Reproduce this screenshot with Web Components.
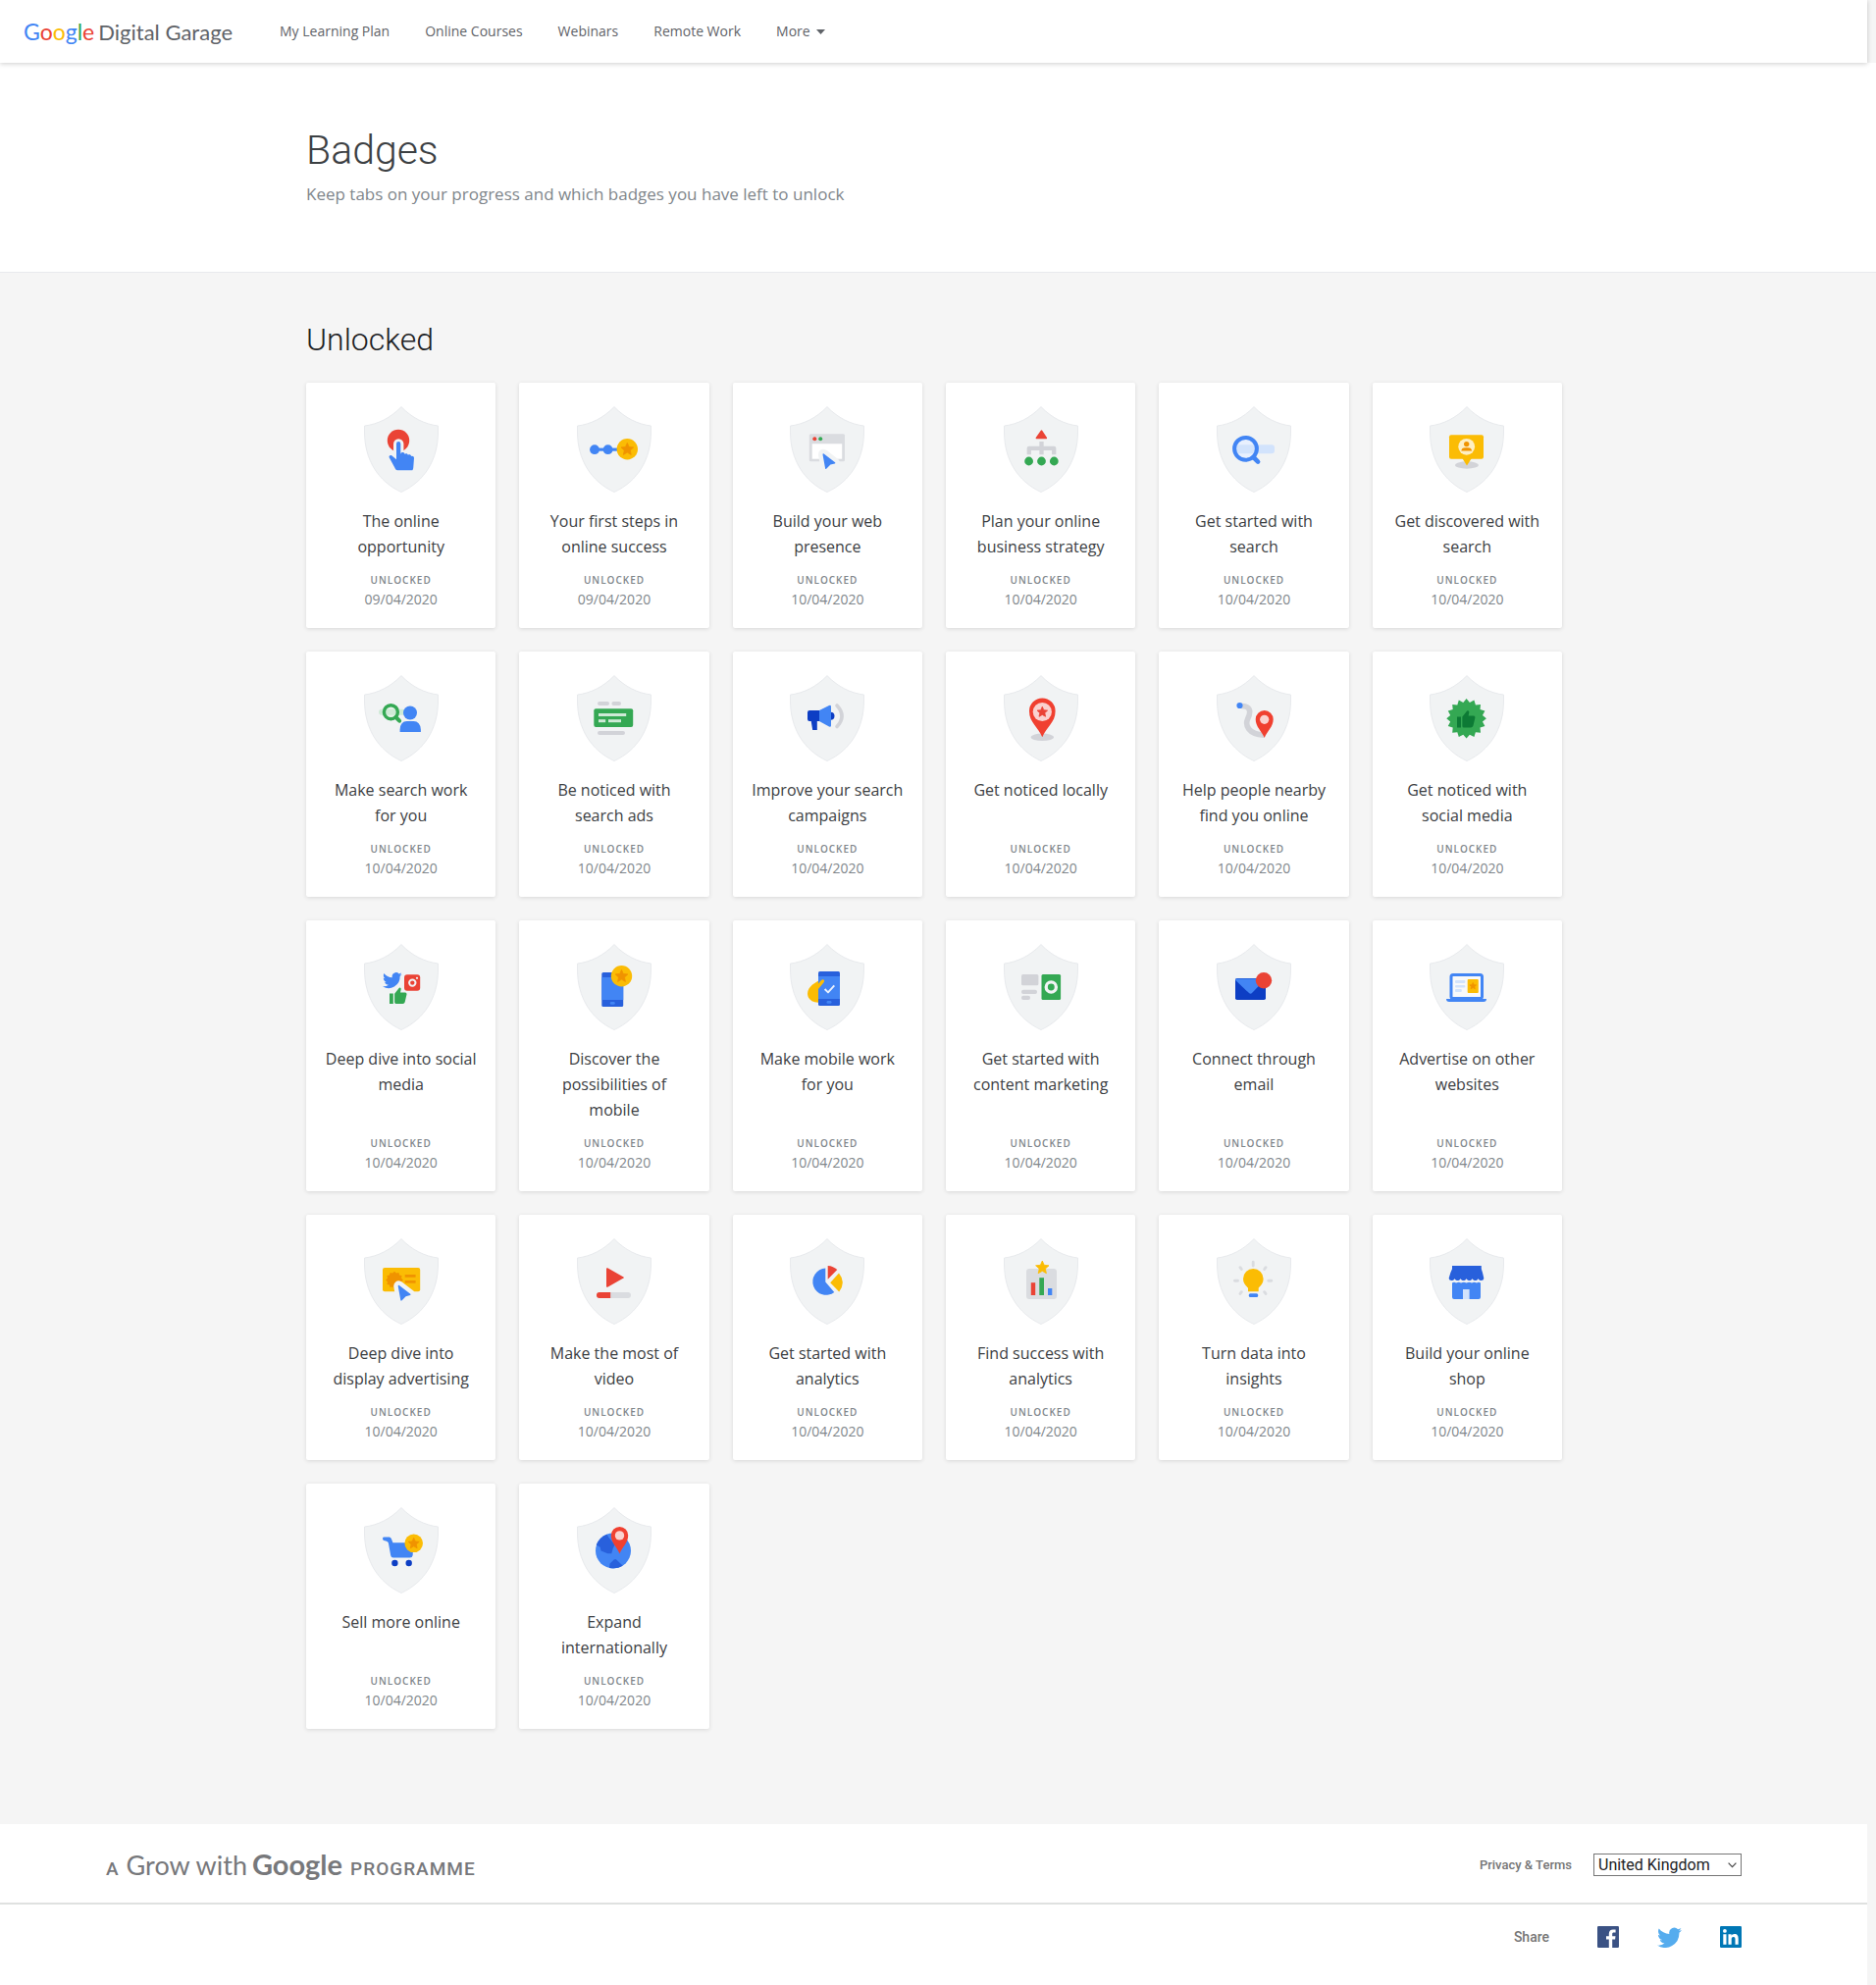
<!DOCTYPE html>
<html lang="en-GB">
<head>
<meta charset="utf-8">
<title>Badges - Google Digital Garage</title>
<style>
  html { background: #f5f5f5; }
  body {
    margin: 0;
    background: #f5f5f5;
    font-family: "Open Sans", "Noto Sans", sans-serif;
    --gutter: 9px;
    --blue: #4285f4;
    --red: #ea4335;
    --yellow: #fbbc04;
    --green: #34a853;
  }
</style>
</head>
<body>
<garage-header>
  <a href="#plan">My Learning Plan</a>
  <a href="#courses">Online Courses</a>
  <a href="#webinars">Webinars</a>
  <a href="#remote">Remote Work</a>
</garage-header>
<main>
  <page-hero>
    <h1 slot="title">Badges</h1>
    <p slot="lead">Keep tabs on your progress and which badges you have left to unlock</p>
  </page-hero>
  <badge-section>
    <h2 slot="title">Unlocked</h2>
    <badge-card icon="tap" date="09/04/2020">The online opportunity</badge-card>
    <badge-card icon="steps" date="09/04/2020">Your first steps in online success</badge-card>
    <badge-card icon="browser" date="10/04/2020">Build your web presence</badge-card>
    <badge-card icon="strategy" date="10/04/2020">Plan your online business strategy</badge-card>
    <badge-card icon="search" date="10/04/2020">Get started with search</badge-card>
    <badge-card icon="discovered" date="10/04/2020">Get discovered with search</badge-card>
    <badge-card icon="searchUser" date="10/04/2020">Make search work for you</badge-card>
    <badge-card icon="ads" date="10/04/2020">Be noticed with search ads</badge-card>
    <badge-card icon="megaphone" date="10/04/2020">Improve your search campaigns</badge-card>
    <badge-card icon="local" date="10/04/2020">Get noticed locally</badge-card>
    <badge-card icon="route" date="10/04/2020">Help people nearby find you online</badge-card>
    <badge-card icon="seal" date="10/04/2020">Get noticed with social media</badge-card>
    <badge-card icon="social" date="10/04/2020">Deep dive into social media</badge-card>
    <badge-card icon="phoneStar" date="10/04/2020">Discover the possibilities of mobile</badge-card>
    <badge-card icon="phoneHand" date="10/04/2020">Make mobile work for you</badge-card>
    <badge-card icon="content" date="10/04/2020">Get started with content marketing</badge-card>
    <badge-card icon="email" date="10/04/2020">Connect through email</badge-card>
    <badge-card icon="laptop" date="10/04/2020">Advertise on other websites</badge-card>
    <badge-card icon="display" date="10/04/2020">Deep dive into display advertising</badge-card>
    <badge-card icon="video" date="10/04/2020">Make the most of video</badge-card>
    <badge-card icon="pie" date="10/04/2020">Get started with analytics</badge-card>
    <badge-card icon="bars" date="10/04/2020">Find success with analytics</badge-card>
    <badge-card icon="bulb" date="10/04/2020">Turn data into insights</badge-card>
    <badge-card icon="shop" date="10/04/2020">Build your online shop</badge-card>
    <badge-card icon="cart" date="10/04/2020">Sell more online</badge-card>
    <badge-card icon="globe" date="10/04/2020">Expand internationally</badge-card>
  </badge-section>
</main>
<garage-footer></garage-footer>

<script>
const SHIELD = '#f1f3f4', GREY = '#d2d3d8', DARK = '#0d3ec4', MID = '#2860dc', ORANGE = '#f09300';
const BLUE = '#4285f4', RED = '#ea4335', YELLOW = '#fbbc04', GREEN = '#34a853', PALE = '#d2e3fc';

const burst = (cx, cy, outer, inner, points) => {
  const p = [];
  for (let i = 0; i < points * 2; i++) {
    const r = i % 2 ? inner : outer, a = Math.PI * i / points - Math.PI / 2;
    p.push((cx + r * Math.cos(a)).toFixed(1) + ',' + (cy + r * Math.sin(a)).toFixed(1));
  }
  return p.join(' ');
};
const star = (cx, cy, r, fill) => `<polygon points="${burst(cx, cy, r, r * .47, 5)}" fill="${fill}" stroke="${fill}" stroke-width=".8" stroke-linejoin="round"/>`;
const box = (x1, y1, x2, y2, fill, r = 0) => `<rect x="${x1}" y="${y1}" width="${x2 - x1}" height="${y2 - y1}" rx="${r}" fill="${fill}"/>`;
const dot = (cx, cy, r, fill) => `<circle cx="${cx}" cy="${cy}" r="${r}" fill="${fill}"/>`;
const path = (d, fill) => `<path d="${d}" fill="${fill}"/>`;
const line = (d, color, w, cap = 'round') => `<path d="${d}" fill="none" stroke="${color}" stroke-width="${w}" stroke-linecap="${cap}" stroke-linejoin="round"/>`;
const coin = (cx, cy, r) => dot(cx, cy, r, YELLOW) + star(cx, cy + .3, r * .62, ORANGE);
const pin = (cx, cy, r, tip) => path(`M${cx - r} ${cy}a${r} ${r} 0 0 1 ${2 * r} 0C${cx + r} ${cy + r * .9} ${cx + r * .3} ${tip - r * .8} ${cx} ${tip}C${cx - r * .3} ${tip - r * .8} ${cx - r} ${cy + r * .9} ${cx - r} ${cy}z`, '#f04030');
const cursor = (x, y) => {
  const d = `M${x} ${y + .6}q0-1.4 1.2-.8L${x + 12.6} ${y + 8.6}q.8.9-.3 1.2l-4.4 1.2L${x + 4} ${y + 15}q-1 1-1.4-.2z`;
  return `<path d="${d}" fill="${BLUE}" stroke="${SHIELD}" stroke-width="9" stroke-linejoin="round" paint-order="stroke"/>`;
};
const thumb = (x, y, s, fill) => `<g transform="translate(${x} ${y}) scale(${s})" fill="${fill}"><path d="M0 6h4V17H0zM5.4 6.200L10.200.2q.6-.8 1.500-.2.8.6.6 1.600L11.600 5h5.300q1.800.2 1.500 2l-1.900 8.200q-.4 1.800-2.300 1.800H7q-1.600 0-1.600-1.500z"/></g>`;
const BIRD = 'M24 4.600c-.9.400-1.800.7-2.800.8 1-.6 1.800-1.600 2.200-2.700-1 .6-2 1-3.100 1.200A4.900 4.900 0 0 0 11.900 8.400C7.700 8.200 4.100 6.300 1.700 3.200 .4 5.400 1 8.300 3.200 9.800c-.8 0-1.600-.2-2.200-.6v.1c0 2.300 1.600 4.400 3.900 4.800-.7.2-1.500.2-2.200.1.600 2 2.400 3.400 4.600 3.400A9.900 9.900 0 0 1 0 19.500 14 14 0 0 0 21.500 7.100c1-.7 1.800-1.600 2.500-2.500z';
const phone = (x1, y1, x2, y2) => box(x1, y1, x2, y2, MID, 1.5) + box(x1, y1 + 5, x2, y2 - 7, BLUE) + box((x1 + x2) / 2 - 2.5, y2 - 5, (x1 + x2) / 2 + 2.5, y2 - 2.2, BLUE, 1.4);

const ICONS = {
  tap: dot(35, 35, 11.2, RED) + box(30, 33.3, 40.4, 50, SHIELD, 5.2) +
    path('M33 38.200a2.100 2.100 0 0 1 4.300 0V49c.3-2.400 3.700-2.600 4.200-.3 1-1 3.200-.6 3.400 1 1.200-.9 3-.3 3.200 1.200 1.500-.5 2.900.3 2.900 1.900l-.7 9.200c0 1.500-.5 2.500-1 3.300H34c-1.400-.2-2-1.300-2.600-2.600l-5.700-10.500c-.7-1.700 1.200-3 2.500-1.900L33 54.200z', BLUE),
  steps: box(18, 42.600, 42, 45.700, BLUE) + dot(18, 44.200, 4.900, BLUE) + dot(31.600, 44.200, 4.900, BLUE) + coin(51.300, 43.700, 10.700),
  browser: box(19.800, 28.300, 56, 56.300, '#dadce0', 1.500) + box(22.700, 38.300, 53.200, 53.700, '#fff') + dot(25.300, 33.300, 2, RED) + dot(31.200, 33.300, 2, GREEN) + cursor(33.500, 48.600),
  strategy: path('M37.800 24.800q.7-1 1.400 0L44 32q.5 1.300-.8 1.300H33.500q-1.300 0-.8-1.300z', RED) +
    line('M38.500 36v13.300M25.800 49.300v-6.500h25.400v6.500', GREY, 4.300, 'butt') + dot(25.600, 56, 4.400, GREEN) + dot(38.500, 56, 4.400, GREEN) + dot(51.300, 56, 4.400, GREEN),
  search: dot(29.500, 43.300, 12, '#e8f0fe') + box(19, 39.300, 59, 48.200, PALE, 3) + '<circle cx="29.500" cy="43.300" r="11.400" fill="none" stroke="#4285f4" stroke-width="4"/>' + line('M37.500 52l4.600 4.600', BLUE, 4.600),
  discovered: '<ellipse cx="38" cy="60" rx="12" ry="3.700" fill="#d2d3d8"/>' + box(20, 29.300, 55, 53.700, YELLOW, 2) + path('M33.300 53h9.600L38 60.600z', YELLOW) + dot(37.700, 41.300, 8.400, '#feefc3') + dot(37.700, 38.600, 2.700, ORANGE) + path('M32.300 45.600q.3-3.400 4-3.400h2.800q3.700 0 4 3.400z', ORANGE),
  searchUser: dot(27.400, 37.700, 7, '#e6f4ea') + box(15, 34.700, 42, 40.700, '#ceead6', 3) + '<circle cx="27.400" cy="37.700" r="7" fill="none" stroke="#34a853" stroke-width="3.400"/>' + line('M32.500 43l3.600 3.700', GREEN, 4) + dot(47, 38.500, 7, BLUE) + path('M36.600 58v-2.500q.5-8.500 7-8.500h7q6.600 0 7.300 8.500V58z', BLUE),
  ads: box(21, 27, 33, 31, GREY, 2) + box(35.400, 27, 45, 31, GREY, 2) + box(17.300, 34.200, 57.200, 53, GREEN, 2) + box(22, 39, 50.200, 42, '#ceead6') + box(22, 45.200, 29.200, 48.200, '#ceead6') + box(32, 45.200, 45, 48.200, '#ceead6') + box(21, 57, 49, 61, GREY, 2),
  megaphone: dot(41.500, 41.800, 4, DARK) + path('M20 36h10v11h-2.200v9h-4.600l-1.500-9H20q-2 0-2-2V38q0-2 2-2z', DARK) + path('M30 36l10-5q2-.6 2 1.200v19.200q0 1.800-2 1.200l-10-5.600z', BLUE) + line('M48 31q10 10.800 0 21.500', GREY, 3.600),
  local: '<ellipse cx="39.300" cy="63.300" rx="11.800" ry="3.700" fill="#d2d3d8"/>' + pin(39.300, 36.700, 13.300, 63.300) + dot(39.300, 37.500, 9.600, '#fad2cf') + star(39.300, 37.800, 5.600, '#ea4335'),
  route: line('M25 31.500c11 0 9.500 7.500 6.500 13.500-2.500 6 .5 15.300 16.500 16.200', GREY, 5.600, 'butt') + dot(23.500, 31, 3.100, BLUE) + pin(48.700, 45, 9, 64) + dot(48.700, 45.300, 4.600, '#fad2cf'),
  seal: `<polygon points="${burst(37.600, 44.300, 20.300, 16.700, 16)}" fill="${GREEN}"/>` + thumb(28, 36.400, 1, '#0d7a35'),
  social: `<g transform="translate(19 27.300) scale(.82)"><path d="${BIRD}" fill="${BLUE}"/></g>` + box(41, 31.200, 57.200, 47.800, RED, 3) + '<circle cx="49.300" cy="39.600" r="3.200" fill="none" stroke="#f1f3f4" stroke-width="2"/>' + dot(54, 34.800, 1.100, SHIELD) + thumb(26, 44.800, .95, GREEN),
  phoneStar: phone(25.300, 29, 47.200, 64) + coin(45.500, 32.700, 10.700),
  phoneHand: path('M29 59.700q-8 0-10.400-6c-1.800-5 1-9.200 4.400-12.200L31.500 36q2-.8 3.500 1V42l-5 6z', YELLOW) + phone(29, 28, 51, 63) + path('M29 40.500l3-3.500q2.200-1.600 3.200.6 0 1.200-1.200 2.400L29 46z', YELLOW) + line('M35.600 46l3.400 3.400 6.300-7', '#e8f0fe', 1.900, 'butt'),
  content: box(18, 31, 35.400, 42.300, GREY, 1.500) + box(18, 46.700, 34, 51, GREY, 2) + box(18, 52.800, 27, 57, GREY, 2) + box(38.500, 31, 58.100, 57, GREEN, 1.500) + '<circle cx="48.300" cy="44" r="5.100" fill="none" stroke="#f1f3f4" stroke-width="3.300"/>',
  email: box(19, 35, 50, 57, DARK, 1.800) + path('M19.500 35.500H50l-14 14.600q-1.500 1.300-3 0L19.200 37z', BLUE) + dot(48, 37.300, 8.200, RED),
  laptop: '<rect x="22" y="31.500" width="31.500" height="24" rx="2" fill="#f8f9fa" stroke="#4285f4" stroke-width="3"/>' + path('M17 56h41q0 3-3 3H20q-3 0-3-3z', BLUE) + box(26, 37, 36.400, 40, PALE, 1) + box(26, 42, 36.400, 44.400, PALE, 1) + box(26, 46, 32.800, 49, PALE, 1) + box(38.700, 36, 49.800, 50, YELLOW, 1) + star(44.200, 43, 3.500, ORANGE),
  display: box(19, 30, 57.200, 54.300, YELLOW, 2) + `<polygon points="${burst(31, 42.500, 8.800, 7.200, 12)}" fill="${ORANGE}"/>` + box(41.700, 37, 52.600, 39.800, ORANGE, .5) + box(41.700, 43, 52.600, 45.800, ORANGE, .5) + cursor(34.700, 48.200),
  video: path('M30 30.800q.3-1 1.300-.5L47.500 39.400q.9.600 0 1.200L31.300 49.700q-1 .5-1.300-.5z', RED) + box(20, 55, 55, 61, '#dadce0', 3) + path('M34.200 55H23a3 3 0 0 0 0 6h11.200z', RED),
  pie: path('M36.300 30.600V44.500l9 10.400A13.600 13.600 0 1 1 36.300 30.600z', BLUE) + path('M38.700 28q5.700.3 9.600 4.100L38.700 41.700z', RED) + path('M41.200 45.200l8.800-9.600q7.500 9.400.2 18.800z', YELLOW),
  bars: box(23, 31, 54, 62, '#dadce0', 3) + box(27.800, 45.200, 32.200, 58, RED) + box(36.300, 40.200, 41, 58, GREEN) + box(45, 51, 49.300, 58, BLUE) + star(39.300, 30, 7, YELLOW),
  bulb: path('M32 54.300V50.500q-5-4-5-9.200a10.300 10.300 0 0 1 20.600 0q0 5.200-4.900 9.200v3.800z', YELLOW) + box(32.800, 56.300, 42.200, 60, BLUE, 1.500) +
    line('M37.200 24.200v3.800M24 29.700l1.300 1.800M50 29.700l-1.300 1.800M18.500 43.300h3M52.800 43.300h3M24 56.500l1.300-1.800M50 56.500l-1.300-1.800', '#dadce0', 2.900),
  shop: path('M23 28h29.800v3.200q1.200 3 2.500 9.300c0 3.300-4.700 3.300-5.700.4-1 2.800-5 2.800-6 0-1 2.800-5 2.800-6 0-1 2.800-5 2.800-6 0-1 2.800-5 2.800-6 0-1 2.900-5.900 2.900-5.900-.4Q21 35 23 31.200z', MID) + path('M23 45.500q2-1.300 4 0 3-1.300 5 0 3-1.300 5.500 0 3-1.300 5.500 0 2.500-1.300 5 0 2-1.300 4 0V60q0 2-2 2H25q-2 0-2-2z', BLUE) + box(34, 52, 40.600, 62, PALE),
  cart: path('M20.500 30.500h5.200q1.500.2 2.200 1.800l1.500 4H50L49.700 49q-.4 2.600-3 2.600H29.800q-2.200 0-2.600-2.300l-2.300-12.700q-.5-2-2.600-2.200l-2-.3q-1.500-.5-1.300-2.300.1-1.200 1.500-1.300z', BLUE) + dot(31.400, 57, 3.200, DARK) + dot(45.700, 57, 3.200, DARK) + coin(50.700, 36.800, 9.300),
  globe: dot(37, 44.400, 18, BLUE) + path('M30.500 27.700q-8 3.200-10.800 10.800l4 2.200.8 3.800 6.800 2.800h4l1.200-4.600 2-4.400-6-7.400z', MID) + path('M33 61.900l.6-4.400 4.200-4q1.600-1 3 .4l6 5.800q-6 3.700-13.800 2.200z', MID) + pin(43.500, 28.700, 8.700, 47.500) + dot(43.500, 28.900, 4.700, '#fad2cf')
};

const define = (name, html, setup) => {
  const template = document.createElement('template');
  template.innerHTML = html;
  customElements.define(name, class extends HTMLElement {
    constructor() {
      super();
      this.attachShadow({ mode: 'open' }).append(template.content.cloneNode(true));
    }
    connectedCallback() { if (setup) setup(this, this.shadowRoot); }
  });
};

define('badge-icon', `
  <style>
    :host { display: block; width: 76px; height: 88px; }
    svg { display: block; }
  </style>
  <svg width="76" height="88" viewBox="0 0 76 88" aria-hidden="true">
    <path d="M38 .6C49 12 62 18.400 75.500 20v6C75.500 54 62 76.500 38 87.500 14 76.500 .5 54 .5 26v-6C14 18.400 27 12 38 .6z" fill="#f1f3f4" stroke="#e8eaed"/>
    <g></g>
  </svg>`,
  (host, root) => { root.querySelector('g').innerHTML = ICONS[host.getAttribute('name')]; });

define('badge-card', `
  <style>
    :host {
      display: flex; flex-direction: column; align-items: center; box-sizing: border-box;
      padding: 24px 18px 19px; background: #fff; border-radius: 2px; text-align: center;
      box-shadow: 0 1px 4px rgba(0, 0, 0, .12);
    }
    .title { margin: 16px 0 11px; font-size: 16px; line-height: 26px; font-weight: 400; color: #3c4043; }
    dl { margin: auto 0 0; color: #80868b; line-height: 20px; }
    dt { font-size: 10px; font-weight: 600; letter-spacing: 1px; text-transform: uppercase; }
    dd { margin: 0; font-size: 14px; }
  </style>
  <div class="icon"></div>
  <h3 class="title"><slot></slot></h3>
  <dl><dt>Unlocked</dt><dd></dd></dl>`,
  (host, root) => {
    root.querySelector('.icon').innerHTML = `<badge-icon name="${host.getAttribute('icon')}"></badge-icon>`;
    root.querySelector('dd').textContent = host.getAttribute('date');
  });

define('badge-section', `
  <style>
    :host { display: block; padding: 48px 32px 97px 24px; }
    .inner { max-width: 1280px; margin: 0 auto; }
    ::slotted(h2) { margin: 0 0 24px; font: 300 32px/40px Roboto, sans-serif; color: #202124; }
    .grid { display: grid; grid-template-columns: repeat(6, 1fr); gap: 24px; }
    @media (max-width: 1200px) { .grid { grid-template-columns: repeat(auto-fill, minmax(190px, 1fr)); } }
  </style>
  <div class="inner">
    <slot name="title"></slot>
    <div class="grid"><slot></slot></div>
  </div>`);

define('page-hero', `
  <style>
    :host { display: block; padding: 65px 32px 66px 24px; background: #fff; border-bottom: 1px solid #e8eaed; }
    .inner { max-width: 1280px; margin: 0 auto; }
    ::slotted(h1) { margin: 0 0 8px; font: 300 41px/48px Roboto, sans-serif; color: #3c4043; }
    ::slotted(p) { margin: 0; font-size: 17px; line-height: 26px; color: #80868b; }
  </style>
  <div class="inner"><slot name="title"></slot><slot name="lead"></slot></div>`);

define('garage-header', `
  <style>
    :host {
      display: flex; align-items: center; gap: 48px; height: 64px; padding-left: 24px;
      margin-right: var(--gutter); background: #fff; position: relative;
      box-shadow: 0 1px 5px rgba(0, 0, 0, .2);
    }
    .logo { display: flex; align-items: baseline; gap: 4px; font: 400 22px/32px Lato, sans-serif; color: #5f6368; text-decoration: none; }
    .google { font-size: 23px; }
    .b { color: var(--blue); } .r { color: var(--red); } .y { color: var(--yellow); } .g { color: var(--green); }
    nav { display: flex; gap: 36px; font-size: 14px; line-height: 20px; color: #5f6368; }
    ::slotted(a) { color: inherit; text-decoration: none; }
    button { display: flex; align-items: center; gap: 6px; padding: 0; border: 0; background: none; font: inherit; color: inherit; }
  </style>
  <a class="logo" href="#home"><span class="google"><span class="b">G</span><span class="r">o</span><span class="y">o</span><span class="b">g</span><span class="g">l</span><span class="r">e</span></span><span>Digital Garage</span></a>
  <nav>
    <slot></slot>
    <button type="button">More <svg width="9" height="5" viewBox="0 0 9 5" aria-hidden="true"><path d="M0 0h9L4.500 5z" fill="currentColor"/></svg></button>
  </nav>`);

define('garage-footer', `
  <style>
    :host { display: block; margin-right: var(--gutter); background: #fff; font-family: Roboto, sans-serif; font-weight: 500; color: #757575; }
    .row { display: flex; justify-content: space-between; padding: 0 128px 0 108px; }
    .top { align-items: center; height: 77px; padding-top: 3px; border-bottom: 2px solid #dfe1e0; }
    .brand { display: flex; align-items: baseline; gap: 8px; padding-top: 4px; font-size: 19px; line-height: 32px; color: #77787b; }
    .wordmark { display: flex; align-items: baseline; gap: 5px; font: 400 27px/32px Lato, sans-serif; }
    .google { font-size: 29px; font-weight: 700; }
    .caps { letter-spacing: 1px; }
    .legal { display: flex; align-items: center; gap: 22px; font-size: 13px; }
    a { color: inherit; text-decoration: none; }
    .picker { position: relative; display: block; }
    select { appearance: none; display: block; box-sizing: border-box; width: 151px; height: 23px; padding: 0 24px 0 4px; border: 1px solid #767676; border-radius: 0; background: #fff; font: 400 16px/20px Roboto, sans-serif; color: #202124; }
    .chevron { position: absolute; right: 5px; top: 9px; pointer-events: none; }
    .bottom { justify-content: flex-end; align-items: center; height: 22px; padding-top: 22px; padding-bottom: 38px; gap: 49px; font-size: 14px; }
    .links { display: flex; align-items: center; gap: 39px; }
    .links a, .links svg { display: block; }
  </style>
  <footer>
    <div class="row top">
      <div class="brand"><span>A</span><span class="wordmark"><span>Grow with</span><span class="google">Google</span></span><span class="caps">PROGRAMME</span></div>
      <div class="legal">
        <a href="#terms">Privacy &amp; Terms</a>
        <label class="picker">
          <select aria-label="Country"><option>United Kingdom</option></select>
          <svg class="chevron" width="9" height="6" viewBox="0 0 9 6" aria-hidden="true"><path d="M.6.7l3.900 4 3.900-4" fill="none" stroke="#444" stroke-width="1.200"/></svg>
        </label>
      </div>
    </div>
    <div class="row bottom">
      <span>Share</span>
      <div class="links">
        <a href="#facebook" aria-label="Facebook"><svg width="22" height="22" viewBox="0 0 22 22"><rect width="22" height="22" rx="1.200" fill="#3b5284"/><path d="M15.200 22v-8.500h2.900l.4-3.300h-3.300V8.100c0-1 .3-1.600 1.700-1.600h1.700v-3c-.3 0-1.400-.1-2.600-.1-2.500 0-4.200 1.500-4.200 4.300v2.500H9v3.300h2.800V22z" fill="#fff"/></svg></a>
        <a href="#twitter" aria-label="Twitter"><svg width="25" height="22" viewBox="0 1.500 24 19.500"><path d="${BIRD}" fill="#55acee"/></svg></a>
        <a href="#linkedin" aria-label="LinkedIn"><svg width="22" height="22" viewBox="0 0 22 22"><rect width="22" height="22" rx="1.200" fill="#0077b5"/><circle cx="4.900" cy="4.900" r="1.900" fill="#fff"/><path d="M3.300 8.300h3.200v10.400H3.300zM8.500 8.300h3.100v1.400c.5-.9 1.600-1.700 3.100-1.700 3.200 0 4 2 4 5v5.700h-3.200v-5.100c0-1.500-.2-2.700-1.800-2.700s-2 1.200-2 2.600v5.200H8.500z" fill="#fff"/></svg></a>
      </div>
    </div>
  </footer>`);
</script>
</body>
</html>
